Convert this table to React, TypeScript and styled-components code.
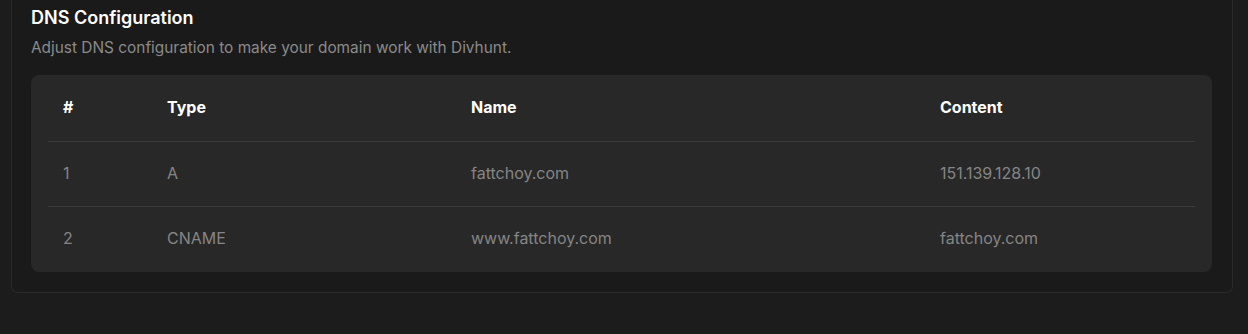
import React from "react";
import styled, { createGlobalStyle } from "styled-components";

const Global = createGlobalStyle`
  html, body { margin: 0; padding: 0; background: #1c1c1c; }
  body { font-family: Inter, "Noto Sans", sans-serif; -webkit-font-smoothing: antialiased; }
`;

const Page = styled.div`
  padding: 0 15px 0 11px;
  width: 1248px;
  box-sizing: border-box;
`;

const Card = styled.section`
  box-sizing: border-box;
  width: 1222px;
  background: #1a1a1a;
  border: 1px solid #2a2a2a;
  border-top: 0;
  border-radius: 0 0 7px 7px;
  padding: 6px 20px 20px 19px;
`;

const Title = styled.h2`
  margin: 0;
  font-size: 18px;
  line-height: 24px;
  font-weight: 600;
  color: #ffffff;
`;

const Subtitle = styled.p`
  margin: 7px 0 16px;
  font-size: 15.4px;
  line-height: 22px;
  color: #8a8a8a;
`;

const TableBox = styled.div`
  background: #282828;
  border-radius: 8px;
  padding: 0 17px 1px;
`;

const Row = styled.div<{ $head?: boolean }>`
  display: grid;
  grid-template-columns: 104px 304px 469px 1fr;
  align-items: center;
  height: ${(p) => (p.$head ? "66px" : "65px")};
  border-top: ${(p) => (p.$head ? "0" : "1px solid #3a3a3a")};
  box-sizing: border-box;
  padding-bottom: ${(p) => (p.$head ? "2px" : "3px")};
`;

const Cell = styled.div<{ $head?: boolean }>`
  padding-left: 15px;
  font-size: 16px;
  line-height: 20px;
  font-weight: ${(p) => (p.$head ? 700 : 400)};
  color: ${(p) => (p.$head ? "#ffffff" : "#858585")};
`;

const records = [
  { n: "1", type: "A", name: "fattchoy.com", content: "151.139.128.10" },
  { n: "2", type: "CNAME", name: "www.fattchoy.com", content: "fattchoy.com" },
];

export default function App() {
  return (
    <>
      <Global />
      <Page>
        <Card>
          <Title>DNS Configuration</Title>
          <Subtitle>Adjust DNS configuration to make your domain work with Divhunt.</Subtitle>
          <TableBox>
            <Row $head>
              <Cell $head>#</Cell>
              <Cell $head>Type</Cell>
              <Cell $head>Name</Cell>
              <Cell $head>Content</Cell>
            </Row>
            {records.map((r) => (
              <Row key={r.n}>
                <Cell>{r.n}</Cell>
                <Cell>{r.type}</Cell>
                <Cell>{r.name}</Cell>
                <Cell>{r.content}</Cell>
              </Row>
            ))}
          </TableBox>
        </Card>
      </Page>
    </>
  );
}
